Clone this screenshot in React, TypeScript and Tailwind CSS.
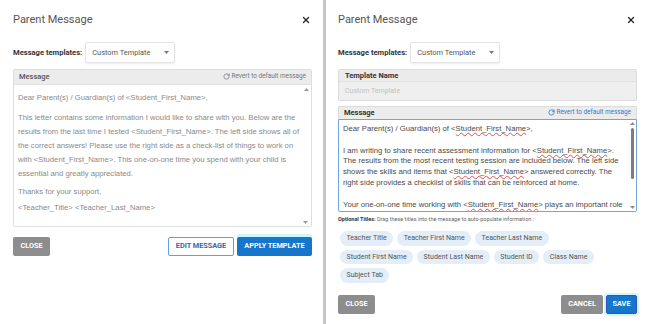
import React from "react";
import { X, RotateCw } from "lucide-react";

const chipRows = [
  ["Teacher Title", "Teacher First Name", "Teacher Last Name"],
  ["Student First Name", "Student Last Name", "Student ID", "Class Name"],
  ["Subject Tab"],
];

function Caret() {
  return (
    <svg width="5" height="3" viewBox="0 0 5 3" className="shrink-0">
      <path d="M0 0h5L2.5 3z" fill="#7a7a7a" />
    </svg>
  );
}

function Arrow({ down, color = "#9a9a9a" }: { down?: boolean; color?: string }) {
  return (
    <svg width="5" height="3" viewBox="0 0 5 3">
      <path d={down ? "M0 0h5L2.5 3z" : "M0 3h5L2.5 0z"} fill={color} />
    </svg>
  );
}

function Student({ wavy }: { wavy?: boolean }) {
  if (!wavy) return <>&lt;Student_First_Name&gt;</>;
  return (
    <>
      &lt;
      <span className="underline decoration-wavy decoration-[#e0524f] decoration-1 underline-offset-[0.5px]">
        Student_First_Name
      </span>
      &gt;
    </>
  );
}

function PanelTop() {
  return (
    <>
      <div className="flex items-center justify-between pt-[13px]">
        <h2 className="text-[11px] leading-[14px] text-[#555]">Parent Message</h2>
        <X className="w-[10px] h-[10px] text-[#222] mr-[1px]" strokeWidth={3} />
      </div>
      <div className="mt-[15px] flex items-center gap-[3px]">
        <span className="text-[7.6px] font-bold text-[#333]">Message templates:</span>
        <div className="w-[90px] h-[21px] bg-white border border-[#e4e4e4] rounded-[2px] shadow-[0_1px_2px_rgba(0,0,0,0.08)] flex items-center justify-between pl-[6px] pr-[5px]">
          <span className="text-[7.4px] text-[#555]">Custom Template</span>
          <Caret />
        </div>
      </div>
    </>
  );
}

function LeftPanel() {
  return (
    <div className="w-[323px] shrink-0 pl-[13px] pr-[11px] bg-white">
      <PanelTop />
      <div className="mt-[6px] border border-[#dedede] rounded-[2px]">
        <div className="h-[15px] bg-[#ececec] border-b border-[#e2e2e2] flex items-center justify-between px-[5px]">
          <span className="text-[7.5px] font-medium text-[#555]">Message</span>
          <span className="flex items-center gap-[2px] text-[6.4px] text-[#777]">
            <RotateCw className="w-[7px] h-[7px]" strokeWidth={2.5} />
            Revert to default message
          </span>
        </div>
        <div className="relative h-[141px] bg-white pl-[4px] pt-[6px] font-['Liberation_Sans',Arial,sans-serif] text-[7.7px] leading-[14px] text-[#8a8a8a] whitespace-nowrap">
          <div>Dear Parent(s) / Guardian(s) of <Student />,</div>
          <div className="mt-[6px]">This letter contains some information I would like to share with you. Below are the</div>
          <div>results from the last time I tested <Student />. The left side shows all of</div>
          <div>the correct answers! Please use the right side as a check-list of things to work on</div>
          <div>with <Student />. This one-on-one time you spend with your child is</div>
          <div>essential and greatly appreciated.</div>
          <div className="mt-[4px]">Thanks for your support,</div>
          <div className="mt-[2px]">&lt;Teacher_Title&gt; &lt;Teacher_Last_Name&gt;</div>
          <div className="absolute right-[2px] top-[3px]">
            <Arrow />
          </div>
          <div className="absolute right-[3px] bottom-[2px]">
            <Arrow down />
          </div>
        </div>
      </div>
      <div className="mt-[10px] flex items-center justify-between">
        <button className="w-[37px] h-[19px] bg-[#8d8d8d] text-white text-[7.3px] font-bold rounded-[2px]">CLOSE</button>
        <div className="flex gap-[3px]">
          <button className="w-[66px] h-[19px] bg-white border border-[#5aa1de] text-[#3c63a6] text-[7.3px] font-bold rounded-[2px]">
            EDIT MESSAGE
          </button>
          <button className="w-[75px] h-[19px] bg-[#1676cc] text-white text-[7.3px] font-bold rounded-[2px] shadow-[0_-3px_0_0_#cdf7fb]">
            APPLY TEMPLATE
          </button>
        </div>
      </div>
    </div>
  );
}

function RightPanel() {
  return (
    <div className="flex-1 pl-[12px] pr-[13px] bg-white">
      <PanelTop />
      <div className="mt-[6px] border border-[#dcdcdc] rounded-[2px] bg-[#efefef]">
        <div className="h-[12px] flex items-center px-[6px] border-b border-[#e2e2e2] bg-[#ebebeb]">
          <span className="text-[7.5px] font-bold text-[#333]">Template Name</span>
        </div>
        <div className="h-[18px] flex items-center px-[6px]">
          <span className="text-[7px] text-[#c2c2c2]">Custom Template</span>
        </div>
      </div>
      <div className="mt-[5px]">
        <div className="h-[13px] bg-[#ececec] border border-b-0 border-[#dcdcdc] rounded-t-[2px] flex items-center justify-between px-[5px]">
          <span className="text-[7.5px] font-bold text-[#333]">Message</span>
          <span className="flex items-center gap-[2px] text-[6.4px] text-[#2d7bd3]">
            <RotateCw className="w-[7px] h-[7px]" strokeWidth={2.8} />
            Revert to default message
          </span>
        </div>
        <div className="relative h-[93px] overflow-hidden bg-white border border-[#6fa6dc] rounded-b-[2px] pl-[4px] pt-[4px] font-['Liberation_Sans',Arial,sans-serif] text-[7.7px] leading-[10.8px] text-[#4a4a4a] whitespace-nowrap">
          <div>Dear Parent(s) / Guardian(s) of <Student wavy />,</div>
          <div className="h-[10.8px]" />
          <div>I am writing to share recent assessment information for <Student wavy />.</div>
          <div>The results from the most recent testing session are included below. The left side</div>
          <div>shows the skills and items that <Student wavy /> answered correctly. The</div>
          <div>right side provides a checklist of skills that can be reinforced at home.</div>
          <div className="h-[10.8px]" />
          <div>Your one-on-one time working with <Student wavy /> plays an important role</div>
          <div className="absolute right-0 top-0 bottom-0 w-[8px] bg-white flex flex-col items-center pt-[2px] pb-[2px]">
            <Arrow color="#8a8a8a" />
            <div className="mt-[3px] w-[3px] h-[51px] rounded-full bg-[#7d7d7d]" />
            <div className="flex-1" />
            <Arrow down color="#8a8a8a" />
          </div>
        </div>
      </div>
      <div className="mt-[4px] text-[5.5px] leading-[7px] text-[#666]">
        <span className="font-bold text-[#333]">Optional Titles:</span> Drag these titles into the message to auto-populate information.:
      </div>
      <div className="mt-[8px] ml-[2px] flex flex-col gap-[4px]">
        {chipRows.map((row, i) => (
          <div key={i} className="flex gap-[4px]">
            {row.map((c) => (
              <span key={c} className="h-[14.5px] px-[6.5px] rounded-full bg-[#e3eef9] text-[7px] text-[#555] flex items-center">
                {c}
              </span>
            ))}
          </div>
        ))}
      </div>
      <div className="mt-[12px] flex items-center justify-between">
        <button className="w-[37px] h-[19px] bg-[#8d8d8d] text-white text-[7.3px] font-bold rounded-[2px]">CLOSE</button>
        <div className="flex gap-[3px]">
          <button className="w-[42px] h-[19px] bg-[#8d8d8d] text-white text-[7.3px] font-bold rounded-[2px]">CANCEL</button>
          <button className="w-[31px] h-[19px] bg-[#1676cc] border border-[#3c4fb8] text-white text-[7.3px] font-bold rounded-[2px] shadow-[0_0_0_2px_#cdf7fb]">
            SAVE
          </button>
        </div>
      </div>
    </div>
  );
}

export default function App() {
  return (
    <div className="w-[650px] h-[324px] flex bg-white font-['Roboto',sans-serif] overflow-hidden">
      <LeftPanel />
      <div className="w-[3px] shrink-0 bg-[#c6c6c6]" />
      <RightPanel />
    </div>
  );
}
